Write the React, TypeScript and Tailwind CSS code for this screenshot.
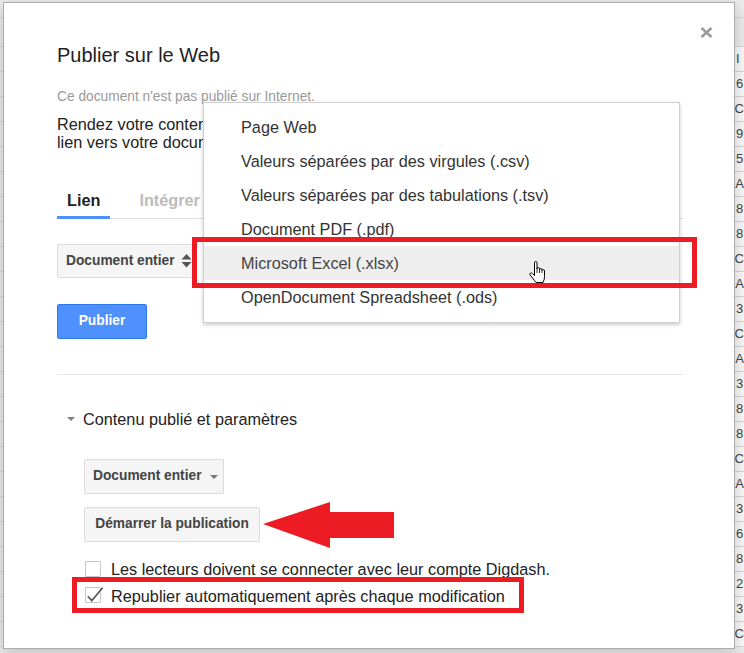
import React from "react";

const letters = ["I", "6", "C", "9", "5", "A", "8", "8", "C", "A", "3", "C", "A", "3", "8", "8", "C", "A", "3", "6", "8", "2", "3", "C"];

const menuItems = [
  "Page Web",
  "Valeurs séparées par des virgules (.csv)",
  "Valeurs séparées par des tabulations (.tsv)",
  "Document PDF (.pdf)",
  "Microsoft Excel (.xlsx)",
  "OpenDocument Spreadsheet (.ods)",
];

export default function App() {
  return (
    <div className="relative w-[744px] h-[653px] overflow-hidden bg-[#ececec] font-['Liberation_Sans',Arial,sans-serif]">
      {/* spreadsheet background */}
      <div className="flex flex-col">
        <div className="h-[18px] border-b border-[#d6d6d6]" />
        <div className="h-[29px] border-b border-[#d6d6d6]" />
        {letters.map((ch, i) => (
          <div key={i} className="h-[25px] flex border-b border-[#d6d6d6]">
            <div className="w-[79px] border-r border-[#d6d6d6]" />
            <div className="w-[141px] border-r border-[#d6d6d6]" />
            <div className="w-[335px] border-r border-[#d6d6d6]" />
            <div className="w-[95px] border-r border-[#d6d6d6]" />
            <div className="w-[85px] border-r border-[#d6d6d6]" />
            <div className="flex-1 bg-[#fafafa] pl-[1px] text-[13px] leading-[24px] text-[#444]">{ch}</div>
          </div>
        ))}
      </div>

      {/* dialog */}
      <div className="absolute left-[3px] top-[2px] w-[732px] h-[647px] bg-white border border-[#acacac] shadow-[0_4px_16px_rgba(0,0,0,0.2)] pt-[40px] pl-[53px] pr-[51px]">
        <svg className="absolute right-[21px] top-[24px]" width="13" height="11" viewBox="0 0 13 11">
          <path d="M1.5 1 L11.5 10 M11.5 1 L1.5 10" stroke="#9a9a9a" strokeWidth="2.6" />
        </svg>

        <h1 className="text-[20px] leading-[24px] text-[#222]">Publier sur le Web</h1>
        <p className="mt-[21px] text-[13.75px] leading-[17px] text-[#999]">Ce document n'est pas publié sur Internet.</p>
        <p className="mt-[11px] w-[146px] text-[16.25px] leading-[17.5px] text-[#222] whitespace-nowrap overflow-hidden">
          Rendez votre contenu accessible à tous en le publiant sur le Web. Créez un
          <br />
          lien vers votre document ou intégrez-le.
        </p>

        <div className="mt-[39px] flex items-end border-b border-[#e0e0e0]">
          <div className="px-[10px] pb-[6px] border-b-[3px] border-[#4d90fe] -mb-px text-[16.25px] leading-[20px] font-bold text-[#222]">Lien</div>
          <div className="ml-[19px] px-[10px] pb-[8px] text-[16.25px] leading-[20px] font-bold text-[#bbb]">Intégrer</div>
        </div>

        <div className="mt-[25px] w-[139px] h-[34px] flex items-center gap-[6px] pl-[8px] border border-[#dcdcdc] bg-[#f5f5f5] rounded-[2px] text-[13.75px] leading-[32px] font-bold text-[#444]">
          <span>Document entier</span>
          <svg width="11" height="14" viewBox="0 0 11 14">
            <polygon points="0.5,5.5 5.5,0 10.5,5.5" fill="#555" />
            <polygon points="0.5,8 5.5,13.5 10.5,8" fill="#555" />
          </svg>
        </div>

        <div className="mt-[26px] w-[90px] h-[35px] flex items-center justify-center bg-[#4d90fe] border border-[#3079ed] rounded-[2px] text-white font-bold text-[13.75px]">
          Publier
        </div>

        <div className="mt-[35px] h-px bg-[#e5e5e5]" />

        <div className="mt-[34px] flex items-center pl-[10px] gap-[8px] text-[16.25px] leading-[20px] text-[#222]">
          <svg width="8" height="4" viewBox="0 0 8 4">
            <polygon points="0,0 8,0 4,4" fill="#808080" />
          </svg>
          <span>Contenu publié et paramètres</span>
        </div>

        <div className="pl-[27px]">
          <div className="mt-[30px] w-[140px] h-[35px] flex items-center gap-[8px] pl-[8px] border border-[#dcdcdc] bg-[#f5f5f5] rounded-[2px] text-[13.75px] font-bold text-[#444]">
            <span>Document entier</span>
            <svg width="8" height="4" viewBox="0 0 8 4">
              <polygon points="0,0 8,0 4,4" fill="#777" />
            </svg>
          </div>
          <div className="mt-[13px] w-[176px] h-[35px] flex items-center justify-center border border-[#dcdcdc] bg-[#f5f5f5] rounded-[2px] text-[13.75px] font-bold text-[#444]">
            Démarrer la publication
          </div>

          <div className="mt-[18px] pl-px flex items-start gap-[10px] text-[16.25px] leading-[18px] text-[#222]">
            <div className="mt-[1px] w-[16px] h-[16px] border border-[#c6c6c6] rounded-[1px] bg-white" />
            <span>Les lecteurs doivent se connecter avec leur compte Digdash.</span>
          </div>
          <div className="mt-[9px] pl-px flex items-start gap-[10px] text-[16.25px] leading-[18px] text-[#222]">
            <div className="w-[16px] h-[16px] border border-[#c6c6c6] rounded-[1px] bg-white">
              <svg width="16" height="16" viewBox="0 0 16 16" className="overflow-visible">
                <path d="M1.8 8.2 L5.8 12.6 L16.6 -0.2" stroke="#5a5a5a" strokeWidth="1.7" fill="none" />
              </svg>
            </div>
            <span>Republier automatiquement après chaque modification</span>
          </div>
        </div>
      </div>

      {/* dropdown menu */}
      <div className="absolute left-[203px] top-[102px] w-[477px] h-[221px] bg-white border border-[#cfcfcf] shadow-[0_2px_4px_rgba(0,0,0,0.2)] py-[7px]">
        {menuItems.map((m, i) => (
          <div
            key={m}
            className={
              i === 4
                ? "h-[34px] pl-[37px] text-[16.25px] leading-[34px] text-[#444] bg-[#eeeeee]"
                : "h-[34px] pl-[37px] text-[16.25px] leading-[34px] text-[#333]"
            }
          >
            {m}
          </div>
        ))}
      </div>

      {/* annotations */}
      <div className="absolute left-[192px] top-[237px] w-[505px] h-[51px] border-[5px] border-[#ed1c24]" />
      <div className="absolute left-[72px] top-[577px] w-[452px] h-[36px] border-[5px] border-[#ed1c24]" />
      <svg className="absolute left-[263px] top-[502px]" width="131" height="46" viewBox="0 0 131 46">
        <polygon points="0,22 67,0 67,10 131,10 131,36 67,36 67,46" fill="#ed1c24" />
      </svg>

      {/* hand cursor */}
      <svg className="absolute left-[529px] top-[261px]" width="18" height="23" viewBox="0 0 18 23">
        <path
          d="M5.5 1.8 Q5.5 0.5 6.75 0.5 Q8 0.5 8 1.8 L8 8 L8 7.8 Q8 6.6 9.25 6.6 Q10.5 6.6 10.5 7.8 L10.5 8.8 Q10.5 7.6 11.75 7.6 Q13 7.6 13 8.8 L13 9.8 Q13 8.6 14.25 8.6 Q15.5 8.6 15.5 9.8 L15.5 15.5 Q15.5 18.5 14 21.5 L7 21.5 Q5.5 19.5 3.5 17 L1 13.8 Q0.5 12.6 1.5 12.1 Q2.5 11.6 3.5 12.6 L5.5 14.6 Z"
          fill="white"
          stroke="black"
          strokeWidth="1"
        />
        <path d="M8 8 L8 12 M10.5 9 L10.5 12 M13 10 L13 12" stroke="black" strokeWidth="0.8" />
      </svg>
    </div>
  );
}
